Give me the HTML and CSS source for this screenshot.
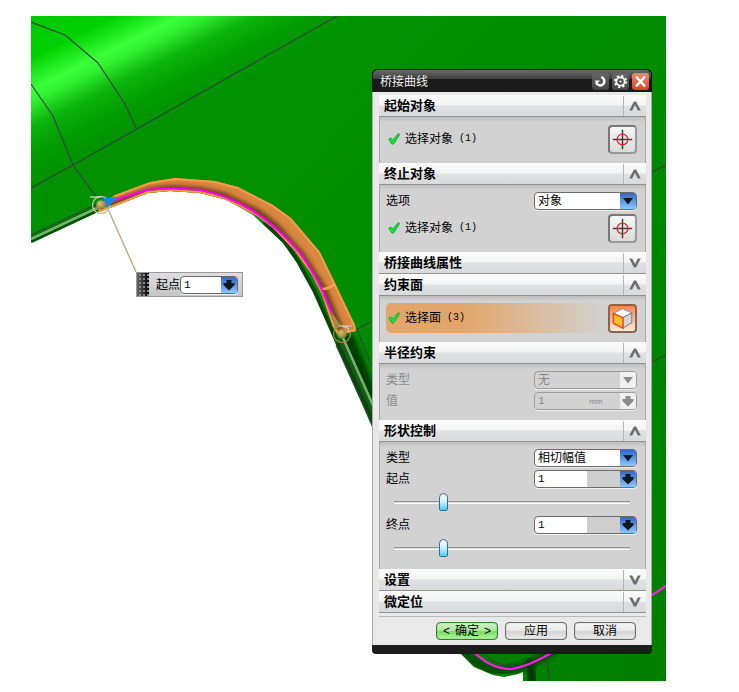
FILE: index.html
```html
<!DOCTYPE html>
<html lang="zh-CN">
<head>
    <title>桥接曲线</title>
    <meta charset="UTF-8">
    <link rel="stylesheet" href="styles.css">
</head>
<body>
    <!-- shared icons -->
    <svg width="0" height="0" class="defs" aria-hidden="true">
        <symbol id="check" viewBox="0 0 12 12">
            <path d="M0.6 6.4 L2.8 4.8 L4.8 7 L10.2 0.6 L11.8 1.4 L5.8 10.8 L4 11.2 Z" fill="#1fdc3c" stroke="#12a32c" stroke-width="0.8"/>
        </symbol>
        <symbol id="target" viewBox="0 0 27 27">
            <path d="M13.5 3 V24 M3 13.5 H24" stroke="#3c3c3c" stroke-width="1.6"/>
            <circle cx="13.5" cy="13.5" r="5.8" fill="none" stroke="#e02a2a" stroke-width="1.4"/>
        </symbol>
        <symbol id="up" viewBox="0 0 12 12">
            <path d="M0.2 10.5 L4.9 1.5 H7.1 L11.8 10.5 H8.8 L6 5 L3.2 10.5 Z" fill="#6e6e6e"/>
        </symbol>
        <symbol id="down" viewBox="0 0 12 12">
            <path d="M0.2 1.5 L4.9 10.5 H7.1 L11.8 1.5 H8.8 L6 7 L3.2 1.5 Z" fill="#6e6e6e"/>
        </symbol>
        <symbol id="triangle" viewBox="0 0 16 16">
            <path d="M3 5 H13 L8 11.5 Z" fill="currentColor"/>
        </symbol>
        <symbol id="arrow" viewBox="0 0 16 16">
            <path d="M5.5 3 H10.5 V6 H13.5 V8 L8 13.5 L2.5 8 V6 H5.5 Z" fill="currentColor"/>
        </symbol>
    </svg>

    <main class="viewport">
        <svg class="scene" viewBox="31 16 635 665" preserveAspectRatio="xMinYMin slice" aria-hidden="true">
            <defs>
                <linearGradient id="surface" gradientUnits="userSpaceOnUse" x1="31" y1="16" x2="100" y2="155">
                    <stop offset="0" stop-color="#00c800"/>
                    <stop offset="0.24" stop-color="#00d000"/>
                    <stop offset="0.36" stop-color="#24ee24"/>
                    <stop offset="0.43" stop-color="#3bff3b"/>
                    <stop offset="0.5" stop-color="#30f030"/>
                    <stop offset="0.64" stop-color="#0cb40c"/>
                    <stop offset="0.8" stop-color="#029c02"/>
                    <stop offset="1" stop-color="#009000"/>
                </linearGradient>
                <linearGradient id="shade" x1="0" y1="0" x2="1" y2="1">
                    <stop offset="0.3" stop-color="#004000" stop-opacity="0"/>
                    <stop offset="1" stop-color="#004000" stop-opacity="0.22"/>
                </linearGradient>
                <radialGradient id="ball" cx="0.4" cy="0.35" r="0.65">
                    <stop offset="0" stop-color="#d6c078"/>
                    <stop offset="1" stop-color="#8f7432"/>
                </radialGradient>
                <filter id="soft"><feGaussianBlur stdDeviation="2"/></filter>
                <clipPath id="tube">
                    <path d="M97 208 L115 195 L150 182 L175 178 L215 181 L238 187 L273 205 L291 218 L320 252 L335 283 L355 325 L356 331 L338 335 L333 327 L322 295 L312 275 L295 251 L273 228 L257 216 L240 207 L224 199 L200 193 L170 191 L148 193 L100 212 Z"/>
                </clipPath>
            </defs>
            <rect x="31" y="16" width="635" height="665" fill="url(#surface)"/>
            <rect x="31" y="16" width="635" height="665" fill="url(#shade)"/>

            <!-- shaded walls under the edges -->
            <path d="M346 336 L385 430" stroke="#003c00" stroke-width="14" filter="url(#soft)"/>
            <path d="M455 640 Q480 674 506 670 Q530 668 560 646" fill="none" stroke="#004c00" stroke-width="9" filter="url(#soft)"/>
            <path d="M528 660 L535 690" stroke="#003800" stroke-width="10" filter="url(#soft)"/>

            <!-- opening -->
            <path fill="#fff" d="M31 243 L100 211 L148 193 L170 191 L200 193 L227 200 L253 215 L283 243 L295 258 L312 288 L337 347 L372 427 L461 654 L474 667 L493 675 L504 677 L518 674 L523 672 V681 H31 Z"/>

            <path d="M31 240 L97 209" stroke="#045204" stroke-width="6"/>
            <path d="M31 239 L97 208" stroke="#6fba68" stroke-width="2.5"/>
            <path d="M264 222 L284 241 L298 261 L314 290 L339 346 L374 425" fill="none" stroke="#0a460a" stroke-width="4"/>
            <path d="M340 338 L378 420" stroke="#1c5a1c" stroke-width="5"/>
            <path d="M343 338 L376 412" stroke="#72b86c" stroke-width="2.5"/>

            <g fill="none" stroke="#30463a" stroke-width="1.2">
                <path d="M31 22 L65 35 L98 63 L125 104 L136 128"/>
                <path d="M31 84 L53 116 L73 165 L97 198"/>
                <path d="M31 188 L73 165 L337 16"/>
                <path d="M31 235 L97 204"/>
                <path d="M336 345 L372 424"/>
                <path d="M372 367 L357 329 L373 321"/>
                <path d="M652 172 L666 165 M652 362 L666 355"/>
                <path d="M546 655 L550 681 M485 655 Q505 672 530 664"/>
            </g>

            <!-- bridge tube -->
            <g clip-path="url(#tube)">
                <rect x="90" y="170" width="280" height="175" fill="#d8883f"/>
                <path d="M108 207 L148 192 L170 189 L200 191 L223 196 L258 213 L276 227 L301 255 L323 289 L340 330" fill="none" stroke="#70401a" stroke-width="8" filter="url(#soft)"/>
                <path d="M97 208 L115 195 L150 182 L175 178 L215 181 L238 187 L273 205 L291 218 L320 252 L335 283 L355 325 L356 331 L338 335 L333 327 L322 295 L312 275 L295 251 L273 228 L257 216 L240 207 L224 199 L200 193 L170 191 L148 193 L100 212 Z" fill="none" stroke="#f99a45" stroke-width="4"/>
            </g>
            <path d="M322 289 Q329 289 335 284" fill="none" stroke="#ffa04a" stroke-width="2.5"/>
            <path d="M108 202 L117 199 L147 190 Q170 187 200 190 Q225 194 253 211 Q278 227 300 253 Q314 273 322 290 L332 314" fill="none" stroke="#ff00f0" stroke-width="2.2"/>
            <path d="M470 648 Q490 670 512 669 Q528 667 560 648 M652 595 L666 586" fill="none" stroke="#ff18f0" stroke-width="2.2"/>

            <!-- end point handles -->
            <path d="M331 311 L341 326 L335 330 Z" fill="#a18a4a"/>
            <circle cx="342" cy="334" r="4.5" fill="url(#ball)"/>
            <circle cx="342" cy="334" r="8.5" fill="none" stroke="#aa8a3c" stroke-width="1.2"/>
            <path d="M339 326 H352 M343 327 Q349 326 349 332" fill="none" stroke="#d8d0c8" stroke-width="1.2"/>
            <path d="M108 209 L136 272" stroke="#b5a878" stroke-width="1.3"/>
            <circle cx="101" cy="205" r="8.5" fill="none" stroke="#c9c3a4" stroke-width="1.3"/>
            <path d="M90 197 H100" stroke="#dcdcdc" stroke-width="1.2"/>
            <path d="M103 198 L118 197 L107 208 Z" fill="#1686e8"/>
            <circle cx="101" cy="205" r="4.8" fill="url(#ball)"/>
        </svg>

        <div class="mini-bar">
            <span class="grip"></span>
            <label for="floatStart">起点</label>
            <span class="field mini">
                <input type="text" id="floatStart" value="1">
                <button class="drop" aria-label="起点选项"><svg><use href="#arrow"/></svg></button>
            </span>
        </div>

        <section class="dialog">
            <header class="title-bar">
                <h1>桥接曲线</h1>
                <button class="win" aria-label="重置">
                    <svg viewBox="0 0 17 17"><path d="M9.2 4.2 A4.2 4.2 0 1 1 4.2 9.6" fill="none" stroke="#fff" stroke-width="2.4"/><path d="M3 7.6 H8 L4.4 11.6 Z" fill="#fff"/></svg>
                </button>
                <button class="win" aria-label="选项">
                    <svg viewBox="0 0 17 17"><circle cx="8.5" cy="8.5" r="5.6" fill="none" stroke="#fff" stroke-width="2" stroke-dasharray="2.2 2.2"/><circle cx="8.5" cy="8.5" r="4.2" fill="none" stroke="#fff" stroke-width="1.8"/><circle cx="8.5" cy="8.5" r="1.1" fill="#fff"/></svg>
                </button>
                <button class="win close" aria-label="关闭">
                    <svg viewBox="0 0 17 17"><path d="M4 3.6 L13 13.4 M13 3.6 L4 13.4" stroke="#fff" stroke-width="2.4"/></svg>
                </button>
            </header>

            <div class="panel">
                <div class="groups">
                    <h2>起始对象 <button aria-label="折叠"><svg><use href="#up"/></svg></button></h2>
                    <div class="group">
                        <div class="pick">
                            <svg class="check"><use href="#check"/></svg>
                            <span>选择对象</span><span class="count">(1)</span>
                            <button class="tool" aria-label="选择对象"><svg><use href="#target"/></svg></button>
                        </div>
                    </div>

                    <h2>终止对象 <button aria-label="折叠"><svg><use href="#up"/></svg></button></h2>
                    <div class="group">
                        <div class="row">
                            <label for="endOption">选项</label>
                            <span class="field">
                                <select id="endOption"><option>对象</option></select>
                                <span class="drop"><svg><use href="#triangle"/></svg></span>
                            </span>
                        </div>
                        <div class="pick">
                            <svg class="check"><use href="#check"/></svg>
                            <span>选择对象</span><span class="count">(1)</span>
                            <button class="tool" aria-label="选择对象"><svg><use href="#target"/></svg></button>
                        </div>
                    </div>

                    <h2>桥接曲线属性 <button aria-label="展开"><svg><use href="#down"/></svg></button></h2>

                    <h2>约束面 <button aria-label="折叠"><svg><use href="#up"/></svg></button></h2>
                    <div class="group">
                        <div class="pick active">
                            <svg class="check"><use href="#check"/></svg>
                            <span>选择面</span><span class="count">(3)</span>
                            <button class="tool" aria-label="选择面">
                                <svg viewBox="0 0 27 27">
                                    <path d="M3.5 8 L13.5 3 L23.5 7.5 L14 12.5 Z" fill="#fff" stroke="#8c8c94"/>
                                    <path d="M23.5 7.5 V18 L14 24 V12.5 Z" fill="#d3d5dc" stroke="#777"/>
                                    <path d="M3.5 8 L14 12.5 V24 L3.5 18.5 Z" fill="#ffbe28" stroke="#f03c14" stroke-width="1.4"/>
                                </svg>
                            </button>
                        </div>
                    </div>

                    <h2>半径约束 <button aria-label="折叠"><svg><use href="#up"/></svg></button></h2>
                    <div class="group form disabled">
                        <div class="row">
                            <label for="radiusType">类型</label>
                            <span class="field">
                                <select id="radiusType" disabled><option>无</option></select>
                                <span class="drop"><svg><use href="#triangle"/></svg></span>
                            </span>
                        </div>
                        <div class="row">
                            <label for="radiusValue">值</label>
                            <span class="field">
                                <input type="text" id="radiusValue" value="1" disabled>
                                <span class="unit">mm</span>
                                <button class="drop" aria-label="值选项" disabled><svg><use href="#arrow"/></svg></button>
                            </span>
                        </div>
                    </div>

                    <h2>形状控制 <button aria-label="折叠"><svg><use href="#up"/></svg></button></h2>
                    <div class="group form">
                        <div class="row">
                            <label for="shapeType">类型</label>
                            <span class="field">
                                <select id="shapeType"><option>相切幅值</option></select>
                                <span class="drop"><svg><use href="#triangle"/></svg></span>
                            </span>
                        </div>
                        <div class="row">
                            <label for="shapeStart">起点</label>
                            <span class="field">
                                <input type="text" id="shapeStart" value="1">
                                <span class="unit"></span>
                                <button class="drop" aria-label="起点选项"><svg><use href="#arrow"/></svg></button>
                            </span>
                        </div>
                        <input type="range" aria-label="起点" min="0" max="5" value="1">
                        <div class="row">
                            <label for="shapeEnd">终点</label>
                            <span class="field">
                                <input type="text" id="shapeEnd" value="1">
                                <span class="unit"></span>
                                <button class="drop" aria-label="终点选项"><svg><use href="#arrow"/></svg></button>
                            </span>
                        </div>
                        <input type="range" aria-label="终点" min="0" max="5" value="1">
                    </div>

                    <h2>设置 <button aria-label="展开"><svg><use href="#down"/></svg></button></h2>
                    <h2>微定位 <button aria-label="展开"><svg><use href="#down"/></svg></button></h2>
                </div>

                <footer class="actions">
                    <button class="ok"><span>&lt;</span>确定<span>&gt;</span></button>
                    <button>应用</button>
                    <button>取消</button>
                </footer>
            </div>
        </section>
    </main>
</body>
</html>
```

FILE: styles.css
```css
* {
    box-sizing: border-box;
}
body {
    margin: 0;
    padding: 16px 73px 11px 31px;
    background: #fff;
    font-family: "Liberation Sans", "Noto Sans CJK SC", sans-serif;
    font-size: 12px;
    line-height: 18px;
    color: #000;
}
button, input, select {
    font: inherit;
    color: inherit;
    margin: 0;
    padding: 0;
}
svg {
    display: block;
}
.defs {
    position: absolute;
}
.viewport {
    position: relative;
    padding: 53px 14px 27px;
    overflow: hidden;
}
.scene {
    position: absolute;
    inset: 0;
    width: 100%;
    height: 100%;
}

/* floating value box next to the start handle */
.mini-bar {
    position: absolute;
    left: 105px;
    top: 256px;
    display: flex;
    align-items: center;
    width: 107px;
    height: 25px;
    padding-right: 4px;
    border: 1px solid #9a9a9a;
    background: linear-gradient(#dedede, #c6c6c6);
}
.grip {
    align-self: stretch;
    width: 12px;
    margin-right: 7px;
    background: radial-gradient(circle, #8a8a8a 1px, transparent 1px) 1px 4px / 4px 4px, linear-gradient(to right, #666, #000);
}
.mini-bar label {
    white-space: nowrap;
}

/* dialog */
.dialog {
    position: relative;
    width: 280px;
    margin-left: auto;
    border-radius: 6px 6px 4px 4px;
    border-bottom: 9px solid #1c1c1c;
    background: #1c1c1c;
}
.title-bar {
    display: flex;
    align-items: center;
    gap: 3px;
    height: 23px;
    padding: 0 2px 0 7px;
    border-radius: 6px 6px 0 0;
    border: 1px solid #111;
    border-bottom: 0;
    background: linear-gradient(#6a6a6a, #3e3e3e 40%, #1a1a1a 42%, #1a1a1a);
    color: #f0f0f0;
}
.title-bar h1 {
    flex: 1;
    margin: 0;
    padding-top: 2px;
    font-size: 12px;
    font-weight: normal;
}
.win {
    width: 17px;
    height: 17px;
    border: 0;
    border-radius: 3px;
    background: linear-gradient(#666, #444);
}
.win svg {
    width: 17px;
    height: 17px;
}
.close {
    background: linear-gradient(#f08a70, #e04020);
}
.panel {
    padding: 3px 5px 5px 6px;
    border: solid #aaa;
    border-width: 0 1px;
    background: #e9e9e9;
}
.groups {
    padding-bottom: 3px;
    border-bottom: 1px solid #bbb;
}
.groups h2 {
    display: flex;
    align-items: center;
    justify-content: space-between;
    height: 22px;
    margin: 0;
    padding-left: 5px;
    border-bottom: 1px solid #929292;
    background: linear-gradient(#fbfbfb, #f3f4f4 48%, #dfe1e2 52%, #d8dadb);
    font-size: 13px;
    font-weight: bold;
}
.groups h2 button {
    display: flex;
    align-items: center;
    justify-content: center;
    width: 23px;
    height: 20px;
    border: 0;
    border-left: 1px solid #b4b4b4;
    background: none;
}
.groups h2 svg {
    width: 12px;
    height: 12px;
}
.group {
    display: flex;
    flex-direction: column;
    gap: 3px;
    padding: 7px 8px 9px 6px;
    border: solid #a8a8a8;
    border-width: 0 1px;
    background: linear-gradient(#bebebe, #d2d2d2 5px);
}
.form {
    padding-bottom: 10px;
}
.row {
    display: flex;
    align-items: center;
    justify-content: space-between;
    height: 18px;
}
.pick {
    display: flex;
    align-items: center;
    height: 30px;
    padding-left: 2px;
}
.check {
    width: 12px;
    height: 12px;
    margin-right: 5px;
}
.count {
    margin-left: 6px;
    font-family: "Liberation Mono", monospace;
    font-size: 10px;
}
.active {
    border-radius: 5px;
    background: linear-gradient(to right, #e2a66a 30%, #d2d2d2 88%);
}
.tool {
    width: 29px;
    height: 29px;
    margin-left: auto;
    border: 2px solid #777;
    border-right-color: #999;
    border-bottom-color: #999;
    border-radius: 4px;
    background: linear-gradient(#f8f8f8, #dadada);
}
.tool svg {
    width: 25px;
    height: 25px;
}
.active .tool {
    background: linear-gradient(#f58a48, #ffe9d8);
    border-color: #8a6450;
}

/* combos and value boxes */
.field {
    position: relative;
    display: flex;
    width: 103px;
    height: 18px;
    border: 1px solid #6c6c6c;
    border-radius: 4px;
    box-shadow: 0 1px #eee;
    overflow: hidden;
    background: #fff;
}
.field select, .field input {
    appearance: none;
    flex: 1;
    min-width: 0;
    height: 16px;
    padding: 0 3px;
    border: 0;
    border-radius: 0;
    background: none;
    line-height: 16px;
    opacity: 1;
}
.field input {
    font-family: "Liberation Mono", monospace;
    font-size: 11px;
}
.mini {
    flex: 1;
    width: auto;
}
.unit {
    width: 33px;
    padding-left: 2px;
    background: #cecece;
    font-size: 8px;
    line-height: 18px;
}
.drop {
    width: 16px;
    height: 16px;
    border: 0;
    background: linear-gradient(#2d66c8, #8cc8ff);
    color: #101820;
    pointer-events: none;
}
button.drop {
    pointer-events: auto;
}
.drop svg {
    width: 16px;
    height: 16px;
}
.disabled, .disabled .field * {
    color: #8c8c8c;
}
.disabled .field {
    border-color: #9c9c9c;
    background: #d2d2d2;
}
.disabled .unit {
    background: none;
}
.disabled .drop {
    background: #f0f0f0;
}

/* sliders */
input[type="range"] {
    appearance: none;
    width: auto;
    height: 22px;
    margin: 0 7px 0 8px;
    background: none;
}
input[type="range"]::-webkit-slider-runnable-track {
    height: 3px;
    border-top: 1px solid #929292;
    border-bottom: 1px solid #fff;
    background: #ddd;
}
input[type="range"]::-webkit-slider-thumb {
    appearance: none;
    width: 9px;
    height: 18px;
    margin-top: -9px;
    border: 1px solid #2d6da0;
    border-radius: 5px 5px 2px 2px;
    background: linear-gradient(#fff, #c8f0fc 50%, #48cdf4);
}

.actions {
    display: flex;
    justify-content: flex-end;
    gap: 7px;
    padding: 5px 10px 0 0;
}
.actions button {
    width: 62px;
    height: 18px;
    border: 1px solid #6e6e6e;
    border-radius: 4px;
    box-shadow: inset 0 0 1px #555;
    background: linear-gradient(#fafafa, #e6e6e6 50%, #d4d4d4 54%, #ececec);
    line-height: 16px;
}
.actions .ok {
    display: flex;
    justify-content: space-between;
    padding: 0 6px;
    border-color: #3d7a3d;
    background: linear-gradient(#d0f4c4, #a8e898 50%, #78dc60 54%, #b0f89c);
}
```
